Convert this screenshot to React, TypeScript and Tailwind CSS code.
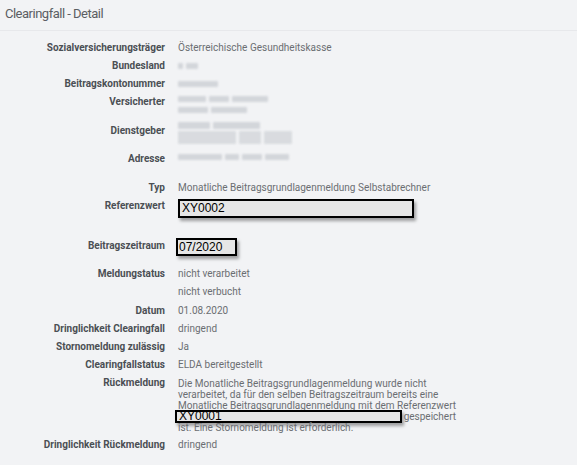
import type { ReactNode } from "react";

function Row({
  label,
  children,
  className = "",
}: {
  label: string;
  children?: ReactNode;
  className?: string;
}) {
  return (
    <div className={`grid grid-cols-[165px_1fr] gap-x-[13px] ${className}`}>
      <div className="text-right font-bold text-[#4b4f54] leading-[18px]">{label}</div>
      <div className="text-[#6b6e72]">{children}</div>
    </div>
  );
}

// pixelated placeholder for the redacted values
function Blur({ parts, className = "" }: { parts: number[]; className?: string }) {
  return (
    <div className={`flex gap-[3px] ${className}`}>
      {parts.map((w, i) => (
        <span
          key={i}
          className="h-full rounded-[1px] bg-[#d3d6da] blur-[0.8px]"
          style={{ width: w }}
        />
      ))}
    </div>
  );
}

function Marked({ children, className = "" }: { children: ReactNode; className?: string }) {
  return (
    <span
      className={`inline-block border-2 border-black bg-[#e6e6e6] font-['Liberation_Sans',Arial,sans-serif] text-black shadow-[2px_3px_3px_rgba(0,0,0,0.35)] ${className}`}
    >
      {children}
    </span>
  );
}

export default function App() {
  return (
    <div className="min-h-[467px] bg-white font-['Roboto',sans-serif] text-[10px]">
      <div className="h-[465px] bg-[#f2f3f5]">
        <div className="h-[31px] border-b border-[#e7e8eb] pl-[5px] pt-[6px] text-[13px] leading-[16px] tracking-[-0.5px] text-[#5b5e63]">
          Clearingfall - Detail
        </div>

        <div className="pt-[8px]">
          <Row label="Sozialversicherungsträger">
            <span className="leading-[18px]">Österreichische Gesundheitskasse</span>
          </Row>
          <Row label="Bundesland">
            <Blur parts={[5, 12]} className="mt-[6px] h-[6px]" />
          </Row>
          <Row label="Beitragskontonummer">
            <Blur parts={[40]} className="mt-[6px] h-[6px]" />
          </Row>
          <Row label="Versicherter" className="h-[29px]">
            <Blur parts={[28, 20, 36]} className="mt-[3px] h-[6px]" />
            <Blur parts={[30, 36]} className="mt-[5px] h-[6px]" />
          </Row>
          <Row label="Dienstgeber" className="h-[28px]">
            <Blur parts={[32, 47]} className="h-[7px]" />
            <Blur parts={[58, 22, 28]} className="mt-[2px] h-[13px] opacity-80" />
          </Row>
          <Row label="Adresse">
            <Blur parts={[44, 14, 20, 24]} className="mt-[4px] h-[6px]" />
          </Row>

          <Row label="Typ" className="mt-[11px]">
            <span className="leading-[18px]">
              Monatliche Beitragsgrundlagenmeldung Selbstabrechner
            </span>
          </Row>
          <Row label="Referenzwert" className="h-[22px]">
            <Marked className="mt-[2px] h-[19px] w-[236px] pl-[2px] text-[12px] leading-[15px]">
              XY0002
            </Marked>
          </Row>

          <Row label="Beitragszeitraum" className="mt-[18px]">
            <Marked className="ml-[-2px] mt-[1px] h-[18px] w-[61px] pl-[1px] text-[12px] leading-[14px] text-[#2d2a66]">
              07/2020
            </Marked>
          </Row>

          <Row label="Meldungstatus" className="mt-[9px]">
            <span className="block leading-[18px]">nicht verarbeitet</span>
            <span className="block leading-[18px]">nicht verbucht</span>
          </Row>
          <Row label="Datum" className="mt-[1px]">
            <span className="leading-[18px]">01.08.2020</span>
          </Row>
          <Row label="Dringlichkeit Clearingfall">
            <span className="leading-[18px]">dringend</span>
          </Row>
          <Row label="Stornomeldung zulässig">
            <span className="leading-[18px]">Ja</span>
          </Row>
          <Row label="Clearingfallstatus">
            <span className="leading-[18px]">ELDA bereitgestellt</span>
          </Row>
          <Row label="Rückmeldung" className="h-[62px]">
            <div className="w-fit whitespace-nowrap pt-[4px] leading-[11px]">
              <div>Die Monatliche Beitragsgrundlagenmeldung wurde nicht</div>
              <div>verarbeitet, da für den selben Beitragszeitraum bereits eine</div>
              <div>Monatliche Beitragsgrundlagenmeldung mit dem Referenzwert</div>
              <div className="flex h-[11px] items-center gap-[2px]">
                <Marked className="ml-[-3px] h-[13px] flex-1 pl-[2px] text-[12px] leading-[9px]">
                  XY0001
                </Marked>
                <span>gespeichert</span>
              </div>
              <div>ist. Eine Stornomeldung ist erforderlich.</div>
            </div>
          </Row>
          <Row label="Dringlichkeit Rückmeldung">
            <span className="leading-[18px]">dringend</span>
          </Row>
        </div>
      </div>
    </div>
  );
}
